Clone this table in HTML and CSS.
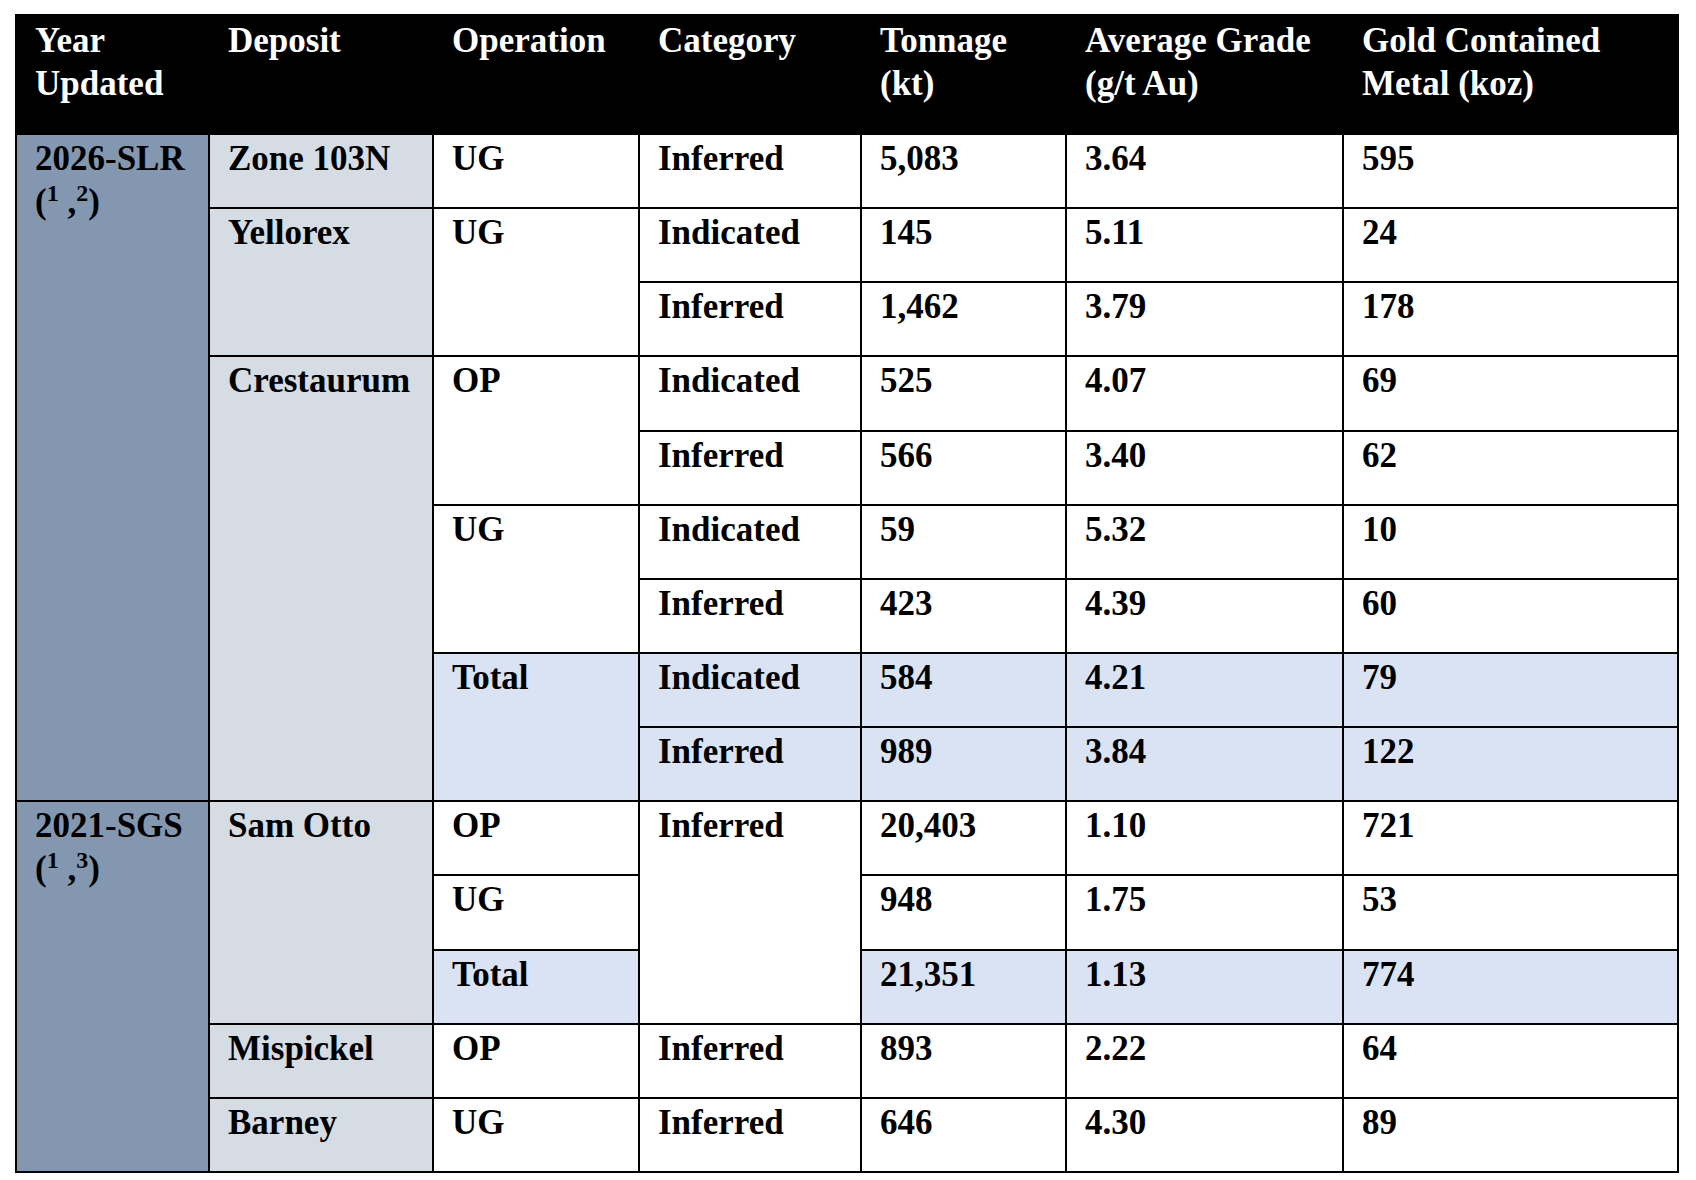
FILE: index.html
```html
<!DOCTYPE html>
<html>
<head>
<meta charset="utf-8">
<link rel="stylesheet" href="styles.css">
</head>
<body>
<table class="res">
<colgroup>
<col class="c1"><col class="c2"><col class="c3"><col class="c4"><col class="c5"><col class="c6"><col class="c7">
</colgroup>
<thead>
<tr class="head">
<th>Year<br>Updated</th><th>Deposit</th><th>Operation</th><th>Category</th><th>Tonnage<br>(kt)</th><th>Average Grade<br>(g/t Au)</th><th>Gold Contained<br>Metal (koz)</th>
</tr>
</thead>
<tbody>
<tr>
<td rowspan="9" class="yr">2026-SLR<br>(<sup>1</sup> ,<sup>2</sup>)</td>
<td class="dep">Zone 103N</td><td>UG</td><td>Inferred</td><td>5,083</td><td>3.64</td><td>595</td>
</tr>
<tr>
<td rowspan="2" class="dep">Yellorex</td><td rowspan="2">UG</td><td>Indicated</td><td>145</td><td>5.11</td><td>24</td>
</tr>
<tr><td>Inferred</td><td>1,462</td><td>3.79</td><td>178</td></tr>
<tr>
<td rowspan="6" class="dep">Crestaurum</td><td rowspan="2">OP</td><td>Indicated</td><td>525</td><td>4.07</td><td>69</td>
</tr>
<tr><td>Inferred</td><td>566</td><td>3.40</td><td>62</td></tr>
<tr><td rowspan="2">UG</td><td>Indicated</td><td>59</td><td>5.32</td><td>10</td></tr>
<tr><td>Inferred</td><td>423</td><td>4.39</td><td>60</td></tr>
<tr class="tot"><td rowspan="2">Total</td><td>Indicated</td><td>584</td><td>4.21</td><td>79</td></tr>
<tr class="tot"><td>Inferred</td><td>989</td><td>3.84</td><td>122</td></tr>
<tr>
<td rowspan="5" class="yr">2021-SGS<br>(<sup>1</sup> ,<sup>3</sup>)</td>
<td rowspan="3" class="dep">Sam Otto</td><td>OP</td><td rowspan="3" class="plain">Inferred</td><td>20,403</td><td>1.10</td><td>721</td>
</tr>
<tr><td>UG</td><td>948</td><td>1.75</td><td>53</td></tr>
<tr class="tot"><td>Total</td><td>21,351</td><td>1.13</td><td>774</td></tr>
<tr><td class="dep">Mispickel</td><td>OP</td><td>Inferred</td><td>893</td><td>2.22</td><td>64</td></tr>
<tr><td class="dep">Barney</td><td>UG</td><td>Inferred</td><td>646</td><td>4.30</td><td>89</td></tr>
</tbody>
</table>
</body>
</html>
```
FILE: styles.css
```css
html, body {
  margin: 0;
  padding: 0;
  background: #ffffff;
}
body {
  padding: 14px 0 0 15px;
}
.res {
  border-collapse: collapse;
  table-layout: fixed;
  width: 1662px;
  font-family: "Liberation Serif", "Times New Roman", serif;
  font-weight: bold;
  font-size: 35px;
  line-height: 43px;
  color: #000;
}
.c1 { width: 193px; }
.c2 { width: 224px; }
.c3 { width: 206px; }
.c4 { width: 222px; }
.c5 { width: 205px; }
.c6 { width: 277px; }
.c7 { width: 335px; }
.res th, .res td {
  border: 2px solid #000;
  text-align: left;
  vertical-align: top;
  padding: 2px 4px 0 18px;
  font-weight: bold;
  white-space: nowrap;
}
.head { height: 119px; }
.res th {
  background: #000;
  color: #fff;
  padding-top: 3px;
}
.res tbody tr { height: 74.15px; }
.res td { background: #fff; }
.res td.yr { background: #8497b0; }
.res td.dep { background: #d6dce4; }
.res tr.tot td { background: #dae3f3; }
.res td.plain { background: #fff; }
sup {
  font-size: 24px;
  line-height: 0;
  vertical-align: 12px;
}
```
